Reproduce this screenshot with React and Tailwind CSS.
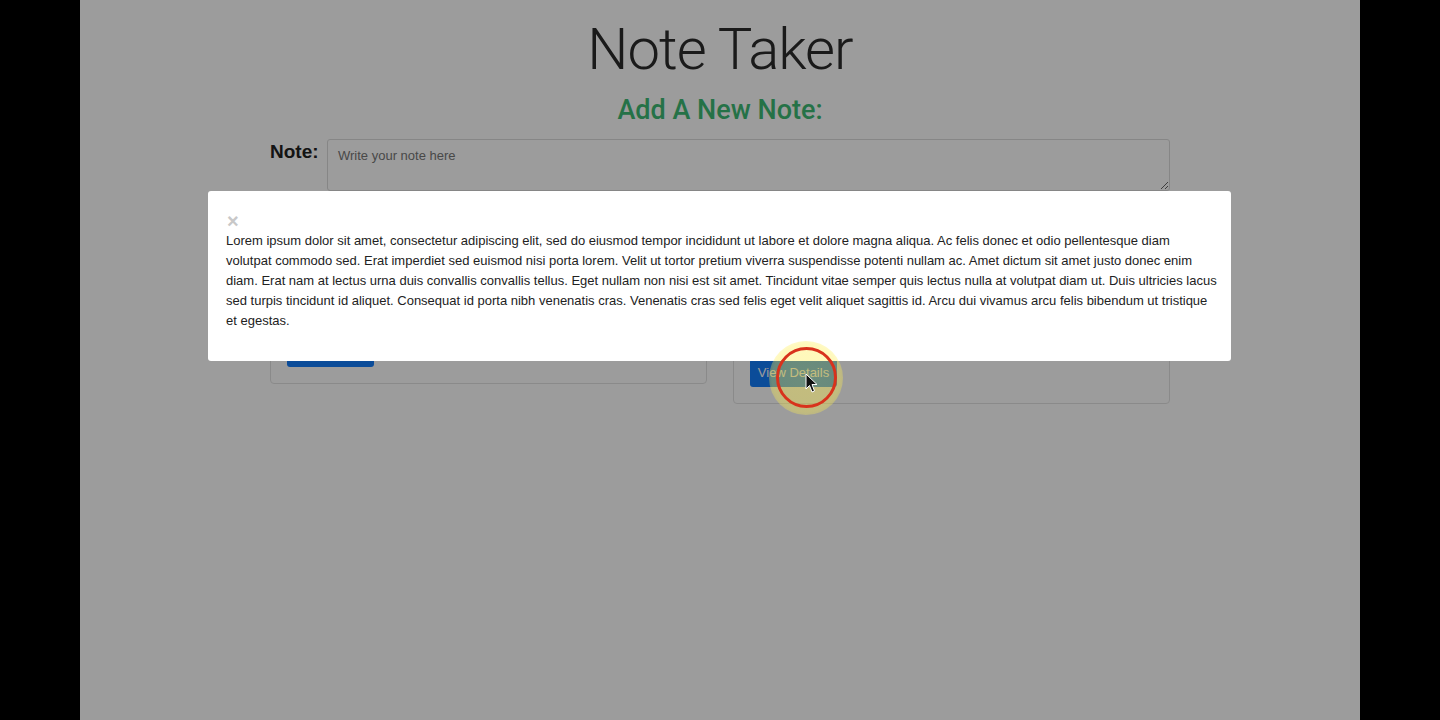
import React from "react";

const LOREM =
  "Lorem ipsum dolor sit amet, consectetur adipiscing elit, sed do eiusmod tempor incididunt ut labore et dolore magna aliqua. Ac felis donec et odio pellentesque diam volutpat commodo sed. Erat imperdiet sed euismod nisi porta lorem. Velit ut tortor pretium viverra suspendisse potenti nullam ac. Amet dictum sit amet justo donec enim diam. Erat nam at lectus urna duis convallis convallis tellus. Eget nullam non nisi est sit amet. Tincidunt vitae semper quis lectus nulla at volutpat diam ut. Duis ultricies lacus sed turpis tincidunt id aliquet. Consequat id porta nibh venenatis cras. Venenatis cras sed felis eget velit aliquet sagittis id. Arcu dui vivamus arcu felis bibendum ut tristique et egestas.";

const notes = [
  { id: 1, textHeight: 60, text: "Buy groceries and pick up the dry cleaning on the way home." },
  { id: 2, textHeight: 80, text: "Lorem ipsum dolor sit amet, consectetur adipiscing elit, sed do eiusmod tempor incididunt ut labore et dolore magna aliqua." },
];

const NoteCard = ({ textHeight, text }) => (
  <div className="border border-[#e2e2e2] rounded-[4px] p-4">
    <p className="text-[13px] leading-[20px] text-[#333]" style={{ height: textHeight }}>
      {text}
    </p>
    <button className="mt-[11px] h-[28px] w-[87px] bg-[#137cfb] text-white text-[13px] rounded-[3px]">
      View Details
    </button>
  </div>
);

const App = () => {
  return (
    <div className="min-h-screen bg-black flex justify-center font-['Liberation_Sans',Arial,sans-serif]">
      <div className="relative w-[1280px] h-[720px] bg-white overflow-hidden">
        <div className="w-[900px] mx-auto">
          <h1 className="pt-[20px] text-center text-[58px] leading-none font-light tracking-[-1px] text-[#2c2c2c] font-['Roboto',sans-serif]">
            Note Taker
          </h1>
          <h2 className="mt-[19px] text-center text-[27px] leading-none font-medium text-[#3dba74] font-['Roboto',sans-serif]">
            Add A New Note:
          </h2>
          <div className="mt-[15px] flex">
            <label className="w-[57px] pt-[3px] text-[19px] leading-none font-semibold text-[#222]">Note:</label>
            <textarea
              className="flex-1 h-[52px] border border-[#dcdcdc] rounded-[3px] px-[10px] py-[8px] text-[13px] leading-[16px] placeholder:text-[#777] outline-none"
              placeholder="Write your note here"
            />
          </div>
          <div className="mt-[10px] h-[30px] flex justify-end">
            <button className="h-[30px] px-4 bg-[#28a745] text-white text-[13px] rounded-[3px]">Save Note</button>
          </div>
          <div className="mt-[20px] grid grid-cols-2 gap-[26px] items-start">
            {notes.map((note) => (
              <NoteCard key={note.id} textHeight={note.textHeight} text={note.text} />
            ))}
          </div>
        </div>

        {/* modal backdrop */}
        <div className="absolute inset-0 bg-black/[0.39]" />

        <div className="absolute top-[191px] left-[128px] w-[1023px] bg-white rounded-[3px] pt-[20px] pl-[18px] pr-[13.5px] pb-[30px]">
          <div className="h-[20px] leading-[20px] text-[#c8c8c8] text-[20px] font-bold pl-[1px]">×</div>
          <p className="text-[13px] leading-[20px] text-[#222]">{LOREM}</p>
        </div>

        {/* click highlight */}
        <div className="absolute left-[689px] top-[341px] w-[74px] h-[74px] rounded-full bg-[radial-gradient(circle,rgba(255,238,80,0.4)_0%,rgba(255,238,80,0.38)_65%,rgba(255,238,80,0)_100%)]" />
        <div className="absolute left-[696px] top-[347px] w-[61px] h-[61px] rounded-full border-[3px] border-[#d8321c]" />
        <svg className="absolute left-[725px] top-[373px]" width="14" height="21" viewBox="0 0 14 21">
          <path d="M1 1 L1 16 L4.5 12.5 L7 19 L9.5 18 L7 11.5 L12 11.5 Z" fill="#111" stroke="#fff" strokeWidth="1" />
        </svg>
      </div>
    </div>
  );
};

export default App;
